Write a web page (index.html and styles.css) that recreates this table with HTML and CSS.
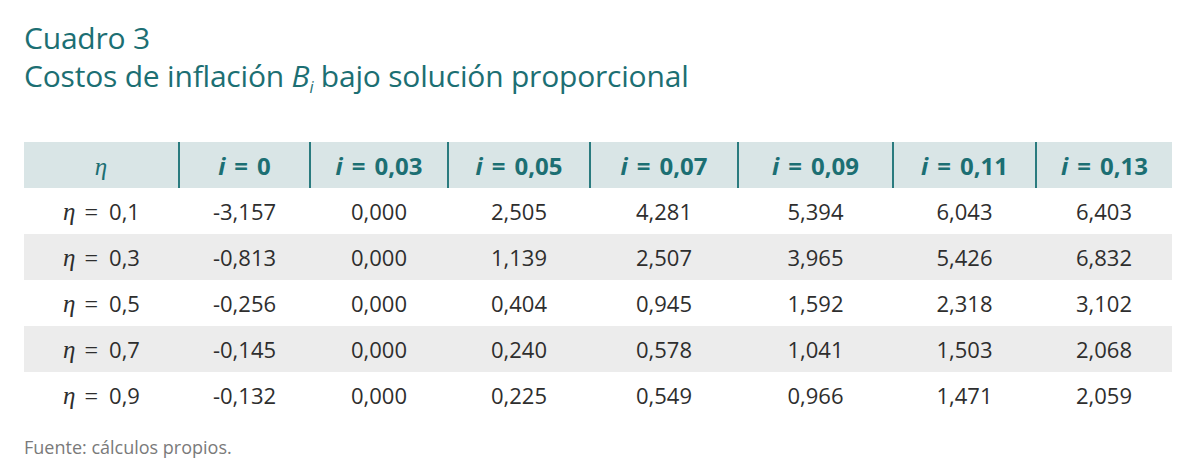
FILE: index.html
```html
<!DOCTYPE html>
<html lang="es">
<head>
<meta charset="utf-8">
<title>Cuadro 3</title>
<link rel="stylesheet" href="styles.css">
</head>
<body>
<div class="page">
  <h1 class="title">
    <span class="line">Cuadro 3</span>
    <span class="line">Costos de inflación <span class="var">B<sub>i</sub></span> bajo solución proporcional</span>
  </h1>
  <table class="data">
    <colgroup>
      <col class="c1"><col class="c2"><col class="c3"><col class="c4"><col class="c5"><col class="c6"><col class="c7"><col class="c8">
    </colgroup>
    <thead>
      <tr>
        <th class="eta-h"><span class="greek">η</span></th>
        <th><span class="iv">i</span><span class="eq">=</span>0</th>
        <th><span class="iv">i</span><span class="eq">=</span>0,03</th>
        <th><span class="iv">i</span><span class="eq">=</span>0,05</th>
        <th><span class="iv">i</span><span class="eq">=</span>0,07</th>
        <th><span class="iv">i</span><span class="eq">=</span>0,09</th>
        <th><span class="iv">i</span><span class="eq">=</span>0,11</th>
        <th><span class="iv">i</span><span class="eq">=</span>0,13</th>
      </tr>
    </thead>
    <tbody>
      <tr><td><span class="greek">η</span><span class="meq">=</span>0,1</td><td>-3,157</td><td>0,000</td><td>2,505</td><td>4,281</td><td>5,394</td><td>6,043</td><td>6,403</td></tr>
      <tr class="alt"><td><span class="greek">η</span><span class="meq">=</span>0,3</td><td>-0,813</td><td>0,000</td><td>1,139</td><td>2,507</td><td>3,965</td><td>5,426</td><td>6,832</td></tr>
      <tr><td><span class="greek">η</span><span class="meq">=</span>0,5</td><td>-0,256</td><td>0,000</td><td>0,404</td><td>0,945</td><td>1,592</td><td>2,318</td><td>3,102</td></tr>
      <tr class="alt"><td><span class="greek">η</span><span class="meq">=</span>0,7</td><td>-0,145</td><td>0,000</td><td>0,240</td><td>0,578</td><td>1,041</td><td>1,503</td><td>2,068</td></tr>
      <tr><td><span class="greek">η</span><span class="meq">=</span>0,9</td><td>-0,132</td><td>0,000</td><td>0,225</td><td>0,549</td><td>0,966</td><td>1,471</td><td>2,059</td></tr>
    </tbody>
  </table>
  <p class="source">Fuente: cálculos propios.</p>
</div>
</body>
</html>
```

FILE: styles.css
```css
html, body {
  margin: 0;
  padding: 0;
  background: #ffffff;
}

.page {
  padding: 19px 28px 0 24px;
  font-family: "Open Sans", "Noto Sans", sans-serif;
  color: #2b2b2b;
}

.title {
  margin: 0;
  font-weight: 400;
  font-size: 30px;
  line-height: 38px;
  letter-spacing: -0.2px;
  color: #1c6f73;
  display: flex;
  flex-direction: column;
}

.title .var {
  font-style: italic;
}

.title sub {
  font-size: 16px;
  line-height: 0;
  vertical-align: -6px;
}

.data {
  margin-top: 47px;
  width: 1148px;
  border-collapse: collapse;
  table-layout: fixed;
}

.c1 { width: 155px; }
.c2 { width: 131px; }
.c3 { width: 138px; }
.c4 { width: 142px; }
.c5 { width: 148px; }
.c6 { width: 155px; }
.c7 { width: 143px; }
.c8 { width: 136px; }

.data thead tr {
  background: #d9e5e6;
}

.data th {
  height: 46px;
  padding: 0;
  font-size: 24px;
  font-weight: 700;
  color: #1c6f73;
  text-align: center;
  border-left: 2px solid #2a7b7f;
}

.data th:first-child {
  border-left: none;
}

.data th .iv {
  font-style: italic;
}

.data th .eq {
  margin: 0 9px;
}

.data th.eta-h {
  font-weight: 400;
}

.data td {
  height: 46px;
  padding: 0;
  font-size: 22px;
  color: #2e2e2e;
  text-align: center;
}

.data td .meq {
  font-family: "Liberation Serif", "DejaVu Serif", serif;
  font-size: 24px;
  margin: 0 11px 0 9px;
}

.data tr.alt {
  background: #ececec;
}

.greek {
  font-family: "Liberation Serif", "DejaVu Serif", serif;
  font-style: italic;
  font-size: 25px;
}

.source {
  margin: 17px 0 0;
  font-size: 18px;
  color: #7a7a7a;
}
```
